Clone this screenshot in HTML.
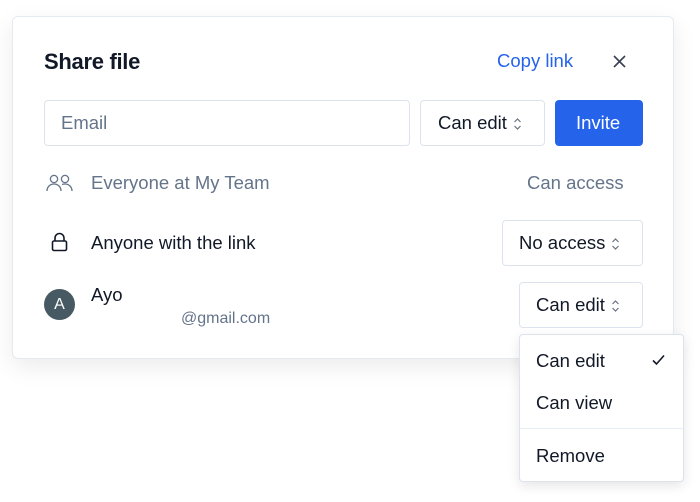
<!DOCTYPE html>
<html><head><meta charset="utf-8"><style>
*{box-sizing:border-box;margin:0;padding:0}
body{width:700px;height:502px;background:#fff;font-family:"Liberation Sans",sans-serif;position:relative;overflow:hidden;color:#111827}
.a{position:absolute}
.card{left:12px;top:16px;width:662px;height:343px;border:1px solid #e5e9f0;border-radius:6px;background:#fff;box-shadow:0 8px 24px rgba(0,0,0,.08)}
.box{border:1px solid #dde3ec;border-radius:4px;background:#fff}
.t{font-size:18.5px;line-height:1}
.chev{display:inline-block;vertical-align:middle;margin-left:6px}
</style></head><body>
<div class="a card"></div>
<div class="a" style="left:44px;top:49px;font-size:22px;font-weight:bold;letter-spacing:-0.3px">Share file</div>
<div class="a t" style="left:497px;top:52px;color:#2563eb">Copy link</div>
<svg class="a" style="left:613px;top:55px" width="13" height="13" viewBox="0 0 13 13"><path d="M1 1L12 12M12 1L1 12" stroke="#374151" stroke-width="1.6"/></svg>

<div class="a box" style="left:44px;top:100px;width:366px;height:46px"></div>
<div class="a t" style="left:61px;top:114px;color:#64748b">Email</div>
<div class="a box" style="left:420px;top:100px;width:125px;height:46px"></div>
<div class="a t" style="left:438px;top:114px">Can edit<svg class="chev" width="9" height="14" viewBox="0 0 9 14"><path d="M1.5 5L4.5 2L7.5 5M1.5 9L4.5 12L7.5 9" stroke="#6b7280" fill="none" stroke-width="1.2"/></svg></div>
<div class="a" style="left:555px;top:100px;width:88px;height:46px;background:#2563eb;border-radius:4px"></div>
<div class="a t" style="left:576px;top:114px;color:#fff">Invite</div>

<svg class="a" style="left:46px;top:174px" width="27" height="18" viewBox="0 0 27 18"><g stroke="#64748b" fill="none" stroke-width="1.3"><circle cx="8" cy="5" r="3.6"/><path d="M1 17c0-4 3-7 7-7s7 3 7 7"/><circle cx="19" cy="5" r="3.6"/><path d="M16 10.5c1-.4 2-.5 3-.5 4 0 7 3 7 7"/></g></svg>
<div class="a t" style="left:91px;top:174px;color:#64748b">Everyone at My Team</div>
<div class="a t" style="left:527px;top:174px;color:#64748b">Can access</div>

<svg class="a" style="left:51px;top:232px" width="17" height="20" viewBox="0 0 17 20"><g stroke="#111827" fill="none" stroke-width="1.6"><rect x="1.5" y="9" width="14" height="9.5" rx="1.5"/><path d="M4 9V6a4.5 4.5 0 0 1 9 0V9"/></g></svg>
<div class="a t" style="left:91px;top:234px">Anyone with the link</div>
<div class="a box" style="left:502px;top:220px;width:141px;height:46px"></div>
<div class="a t" style="left:519px;top:234px">No access<svg class="chev" width="9" height="14" viewBox="0 0 9 14"><path d="M1.5 5L4.5 2L7.5 5M1.5 9L4.5 12L7.5 9" stroke="#6b7280" fill="none" stroke-width="1.2"/></svg></div>

<div class="a" style="left:44px;top:289px;width:31px;height:31px;border-radius:50%;background:#475a63;color:#fff;font-size:16px;text-align:center;line-height:31px">A</div>
<div class="a t" style="left:91px;top:286px">Ayo</div>
<div class="a" style="left:181px;top:310px;font-size:16px;color:#64748b">@gmail.com</div>
<div class="a box" style="left:519px;top:282px;width:124px;height:46px"></div>
<div class="a t" style="left:536px;top:296px">Can edit<svg class="chev" width="9" height="14" viewBox="0 0 9 14"><path d="M1.5 5L4.5 2L7.5 5M1.5 9L4.5 12L7.5 9" stroke="#6b7280" fill="none" stroke-width="1.2"/></svg></div>

<div class="a box" style="left:519px;top:334px;width:165px;height:148px;box-shadow:0 4px 12px rgba(0,0,0,.1)"></div>
<div class="a t" style="left:536px;top:352px">Can edit</div>
<svg class="a" style="left:652px;top:354px" width="13" height="12" viewBox="0 0 13 12"><path d="M1 6.5L4.5 10L12 1.5" stroke="#111827" fill="none" stroke-width="1.6"/></svg>
<div class="a t" style="left:536px;top:394px">Can view</div>
<div class="a" style="left:520px;top:428px;width:163px;height:1px;background:#e8edf3"></div>
<div class="a t" style="left:536px;top:447px">Remove</div>
</body></html>
